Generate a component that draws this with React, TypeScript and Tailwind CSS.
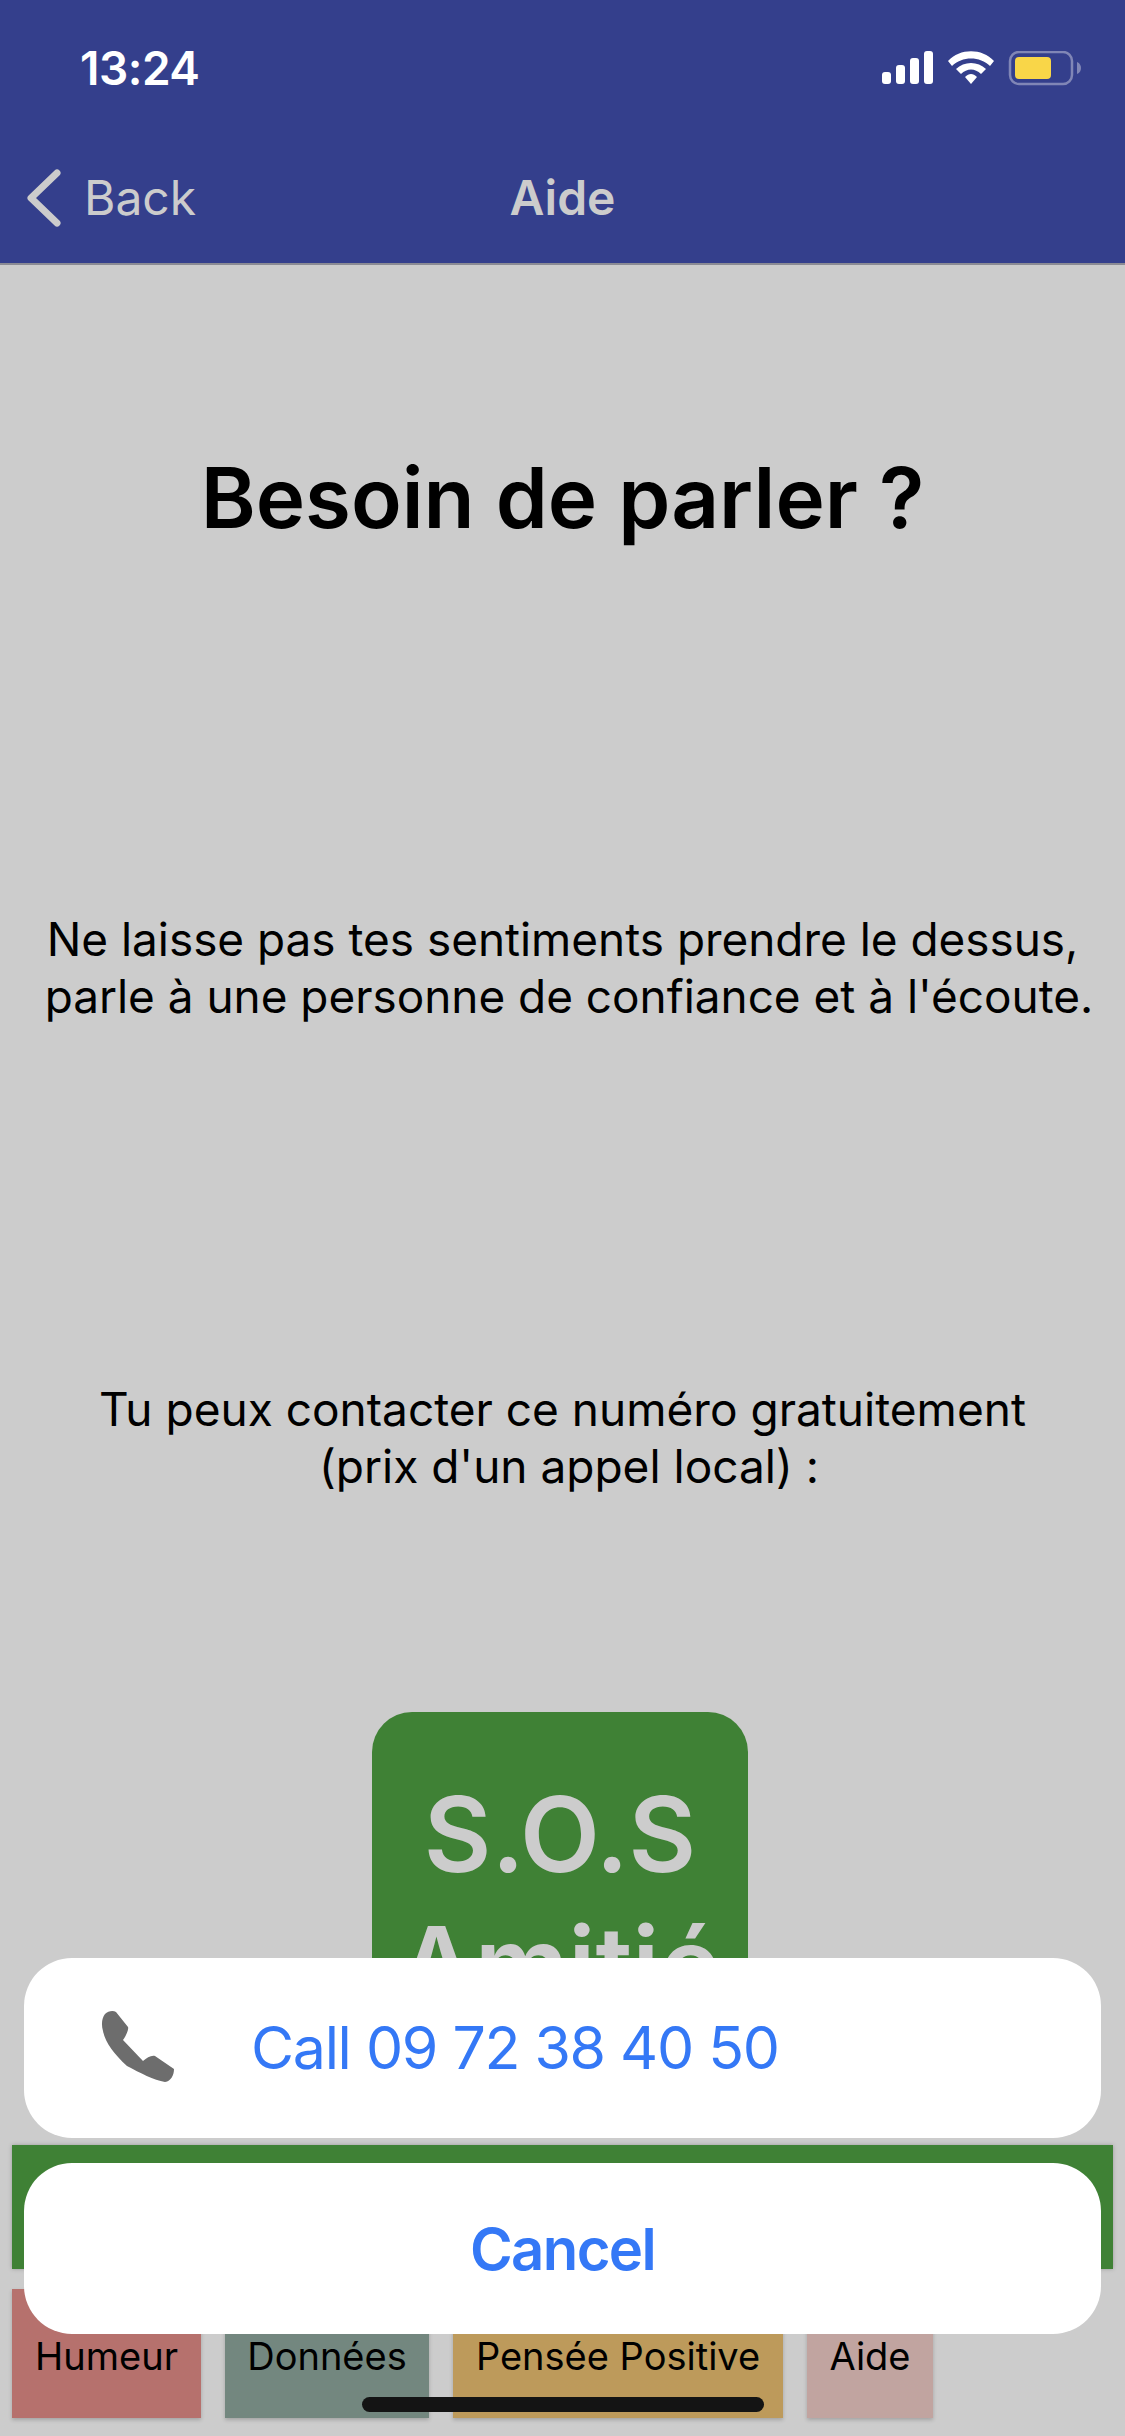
export default function App() {
  const tabs = [
    { label: "Humeur", cls: "w-[189px] bg-[#b6716d]" },
    { label: "Données", cls: "w-[204px] bg-[#73877f]" },
    { label: "Pensée Positive", cls: "w-[330px] bg-[#bd9a5b]" },
    { label: "Aide", cls: "w-[126px] bg-[#c1a4a0]" },
  ];
  return (
    <div className="relative flex h-[2436px] w-[1125px] flex-col overflow-hidden bg-[#cccccc] font-['Inter',sans-serif] text-black">
      <header className="h-[265px] shrink-0 border-b-2 border-[#8b8b94] bg-[#343f8c]">
        <div className="flex h-[168px] items-start justify-between pl-[80px] pr-[43px] pt-[43px]">
          <span className="text-[46px] font-semibold leading-[50px] tracking-[-0.5px] text-white">13:24</span>
          <svg width="200" height="36" viewBox="0 0 200 36" className="mt-[8px]">
            <rect x="0" y="21" width="9" height="12" rx="3" fill="#fff" />
            <rect x="14" y="14" width="9" height="19" rx="3" fill="#fff" />
            <rect x="28" y="7" width="9" height="26" rx="3" fill="#fff" />
            <rect x="42" y="0" width="9" height="33" rx="3" fill="#fff" />
            <path d="M66 10 C78 -3 100 -3 112 10 L108 15 C98 5 80 5 70 15 Z" fill="#fff" />
            <path d="M74 18 C82 10 96 10 104 18 L99 23 C93 17 85 17 79 23 Z" fill="#fff" />
            <path d="M83 26 C87 22 91 22 95 26 L89 33 Z" fill="#fff" />
            <rect x="128" y="1" width="62" height="32" rx="9" fill="none" stroke="#8086b6" strokeWidth="2.5" />
            <rect x="133" y="6" width="36" height="22" rx="4" fill="#f9d648" />
            <path d="M195 11 C198 12 199 15 199 17 C199 19 198 22 195 23 Z" fill="#8086b6" />
          </svg>
        </div>
        <div className="relative flex h-[60px] items-center justify-center">
          <div className="absolute left-[25px] top-[1px] flex items-center gap-[21px]">
            <svg width="38" height="58" viewBox="0 0 38 58" fill="none" stroke="#cccccc" strokeWidth="7" strokeLinecap="round" strokeLinejoin="round">
              <path d="M32 4 L6 29 L32 54" />
            </svg>
            <span className="text-[48px] leading-[58px] text-[#cccccc]">Back</span>
          </div>
          <span className="text-[48px] font-semibold leading-[58px] text-[#cccccc]">Aide</span>
        </div>
      </header>

      <main className="flex flex-1 flex-col items-center overflow-hidden text-center">
        <h1 className="mt-[183px] text-[83.5px] font-semibold leading-[100px]">Besoin de parler ?</h1>
        <p className="mt-[363px] text-[45.9px] leading-[57px]">
          Ne laisse pas tes sentiments prendre le dessus,
          <br />
          &nbsp;parle à une personne de confiance et à l'écoute.
        </p>
        <p className="mt-[356px] text-[46px] leading-[57px]">
          Tu peux contacter ce numéro gratuitement
          <br />
          &nbsp;(prix d'un appel local) :
        </p>
        <div className="mt-[217px] mr-[5px] flex h-[400px] w-[376px] shrink-0 flex-col items-center rounded-[40px] bg-[#3f8135] pt-[57px] text-[104px] font-semibold leading-[130px] text-[#cccccc]">
          <span>S.O.S</span>
          <span>Amitié</span>
        </div>
      </main>

      <div className="mx-[12px] mb-[20px] h-[124px] shrink-0 bg-[#3f8135] shadow-[0_0_4px_rgba(0,0,0,0.25)]" />
      <nav className="mb-[18px] flex h-[129px] shrink-0 gap-[24px] pl-[12px]">
        {tabs.map((t) => (
          <div key={t.label} className={`${t.cls} pt-[44px] text-center text-[38px] leading-[46px] shadow-[0_2px_4px_rgba(0,0,0,0.2)]`}>
            {t.label}
          </div>
        ))}
      </nav>

      <div className="absolute left-[24px] top-[1958px] flex w-[1077px] flex-col gap-[25px]">
        <div className="flex h-[180px] items-center rounded-[48px] bg-white pl-[77px]">
          <svg width="74" height="74" viewBox="-1 0 74 74" fill="#6d6d6d" className="-mt-[2px]">
            <path d="M3 4 C6 1 11 0 14 2 L26 17 C27 19 24 26 21 30 L41 51 C45 48 49 45 53 46 L72 59 C72 65 69 71 63 72 C52 70 38 63 25 56 C12 44 3 32 1 21 C-1 14 0 8 3 4 Z" />
          </svg>
          <span className="ml-[76px] text-[59px] leading-[72px] tracking-[-1.3px] text-[#3478f6]">Call 09 72 38 40 50</span>
        </div>
        <div className="flex h-[171px] items-center justify-center rounded-[48px] bg-white text-[58px] font-semibold leading-[72px] tracking-[-1.6px] text-[#3478f6]">
          Cancel
        </div>
      </div>

      <div className="absolute left-[362px] top-[2397px] h-[15px] w-[402px] rounded-full bg-[#141414]" />
    </div>
  );
}
